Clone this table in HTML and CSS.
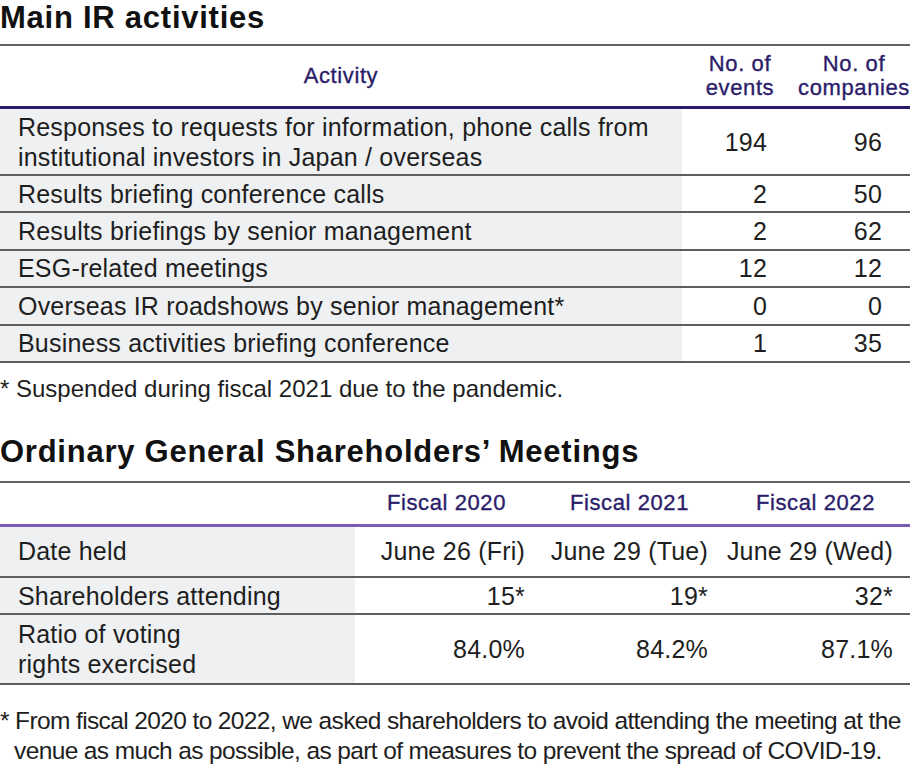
FILE: index.html
```html
<!DOCTYPE html>
<html lang="en">
<head>
<meta charset="utf-8">
<link rel="stylesheet" href="styles.css">
</head>
<body>
<section class="block first">
  <h2 class="title">Main IR activities</h2>
  <table class="tbl ir">
    <colgroup><col class="c-act"><col class="c-ev"><col class="c-co"></colgroup>
    <thead>
      <tr><th>Activity</th><th>No. of<br>events</th><th>No. of<br>companies</th></tr>
    </thead>
    <tbody>
      <tr class="tall"><td class="lbl">Responses to requests for information, phone calls from<br>institutional investors in Japan / overseas</td><td class="num">194</td><td class="num n2">96</td></tr>
      <tr><td class="lbl">Results briefing conference calls</td><td class="num">2</td><td class="num n2">50</td></tr>
      <tr><td class="lbl">Results briefings by senior management</td><td class="num">2</td><td class="num n2">62</td></tr>
      <tr><td class="lbl">ESG-related meetings</td><td class="num">12</td><td class="num n2">12</td></tr>
      <tr><td class="lbl">Overseas IR roadshows by senior management*</td><td class="num">0</td><td class="num n2">0</td></tr>
      <tr><td class="lbl">Business activities briefing conference</td><td class="num">1</td><td class="num n2">35</td></tr>
    </tbody>
  </table>
  <p class="note">* Suspended during fiscal 2021 due to the pandemic.</p>
</section>
<section class="block second">
  <h2 class="title">Ordinary General Shareholders’ Meetings</h2>
  <table class="tbl gm">
    <colgroup><col class="g-lbl"><col class="g-y"><col class="g-y"><col class="g-y3"></colgroup>
    <thead>
      <tr><th></th><th>Fiscal 2020</th><th>Fiscal 2021</th><th>Fiscal 2022</th></tr>
    </thead>
    <tbody>
      <tr class="r-date"><td class="lbl">Date held</td><td class="num">June 26 (Fri)</td><td class="num">June 29 (Tue)</td><td class="num last">June 29 (Wed)</td></tr>
      <tr><td class="lbl">Shareholders attending</td><td class="num">15*</td><td class="num">19*</td><td class="num last">32*</td></tr>
      <tr class="tall"><td class="lbl">Ratio of voting<br>rights exercised</td><td class="num">84.0%</td><td class="num">84.2%</td><td class="num last">87.1%</td></tr>
    </tbody>
  </table>
  <p class="note narrow">* From fiscal 2020 to 2022, we asked shareholders to avoid attending the meeting at the<br><span class="indent">venue as much as possible, as part of measures to prevent the spread of COVID-19.</span></p>
</section>
</body>
</html>
```

FILE: styles.css
```css
html, body {
  margin: 0;
  padding: 0;
  background: #ffffff;
}
body {
  width: 912px;
  font-family: "Liberation Sans", Arial, sans-serif;
  color: #1e1e1e;
}
.title {
  margin: 0;
  font-size: 31px;
  line-height: 35px;
  font-weight: bold;
  color: #111;
  letter-spacing: 0.75px;
}
.tbl {
  width: 910px;
  border-collapse: separate;
  border-spacing: 0;
  border-top: 2px solid #626262;
  font-size: 25px;
  letter-spacing: 0.2px;
}
.first .tbl { margin-top: 9px; }
.second { padding-top: 30px; }
.second .tbl { margin-top: 12px; }

.tbl th {
  color: #2b1d6a;
  font-weight: normal;
  font-size: 22px;
  line-height: 24px;
  letter-spacing: 0.6px;
  -webkit-text-stroke: 0.35px #2b1d6a;
  text-align: center;
  padding: 0;
}
.ir thead th {
  height: 60px;
  border-bottom: 3px solid #2e1a6c;
}
.gm thead th {
  height: 41px;
  border-bottom: 3px solid #7c5cb3;
}
.tbl td {
  border-bottom: 2px solid #5e5e5e;
  padding: 0;
  line-height: 30px;
  height: 35.4px;
  vertical-align: middle;
}
.tbl td.lbl {
  background: #eef0f2;
  padding-left: 18px;
}
.tbl tr.tall td { height: 65px; }
.tbl td.num { text-align: right; }

.c-act { width: 682px; }
.c-ev { width: 116px; }
.c-co { width: 112px; }
.ir td.num { padding-right: 31px; }
.ir td.num.n2 { padding-right: 28px; }

.g-lbl { width: 355px; }
.g-y { width: 183px; }
.g-y3 { width: 189px; }
.gm td.num { padding-right: 13px; }
.gm td.num.last { padding-right: 17px; }
.gm tr.r-date td { height: 49px; }
.gm tr.tall td { height: 68px; }

.note {
  margin: 11px 0 0 0;
  font-size: 24px;
  line-height: 30px;
  color: #1e1e1e;
  letter-spacing: 0;
}
.note.narrow {
  margin-top: 21px;
  font-size: 24.5px;
  letter-spacing: -0.62px;
}
.indent { padding-left: 14px; }
```
